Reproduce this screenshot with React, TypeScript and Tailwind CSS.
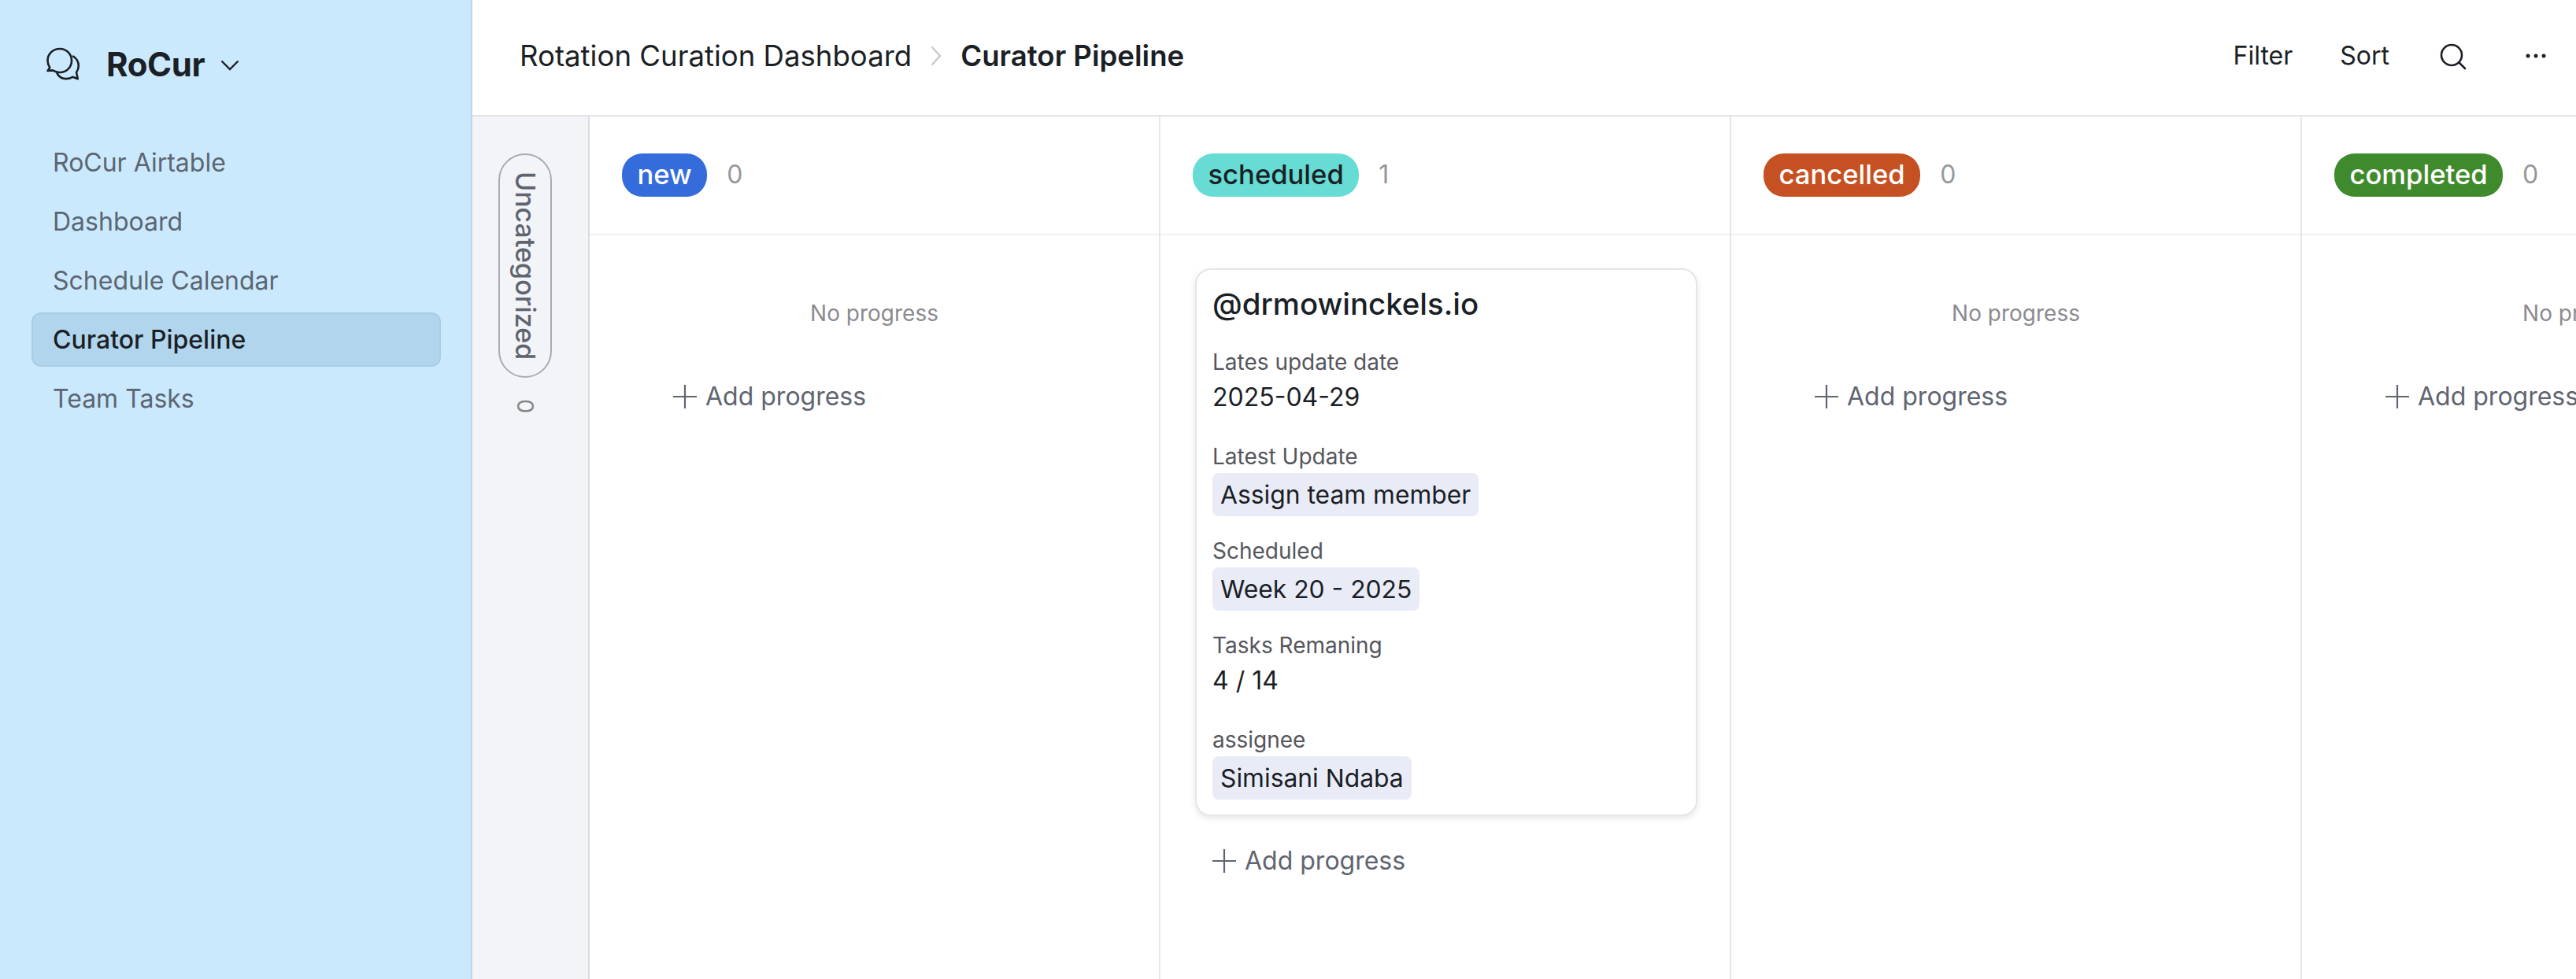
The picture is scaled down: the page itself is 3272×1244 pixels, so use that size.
import React from "react";

const nav = ["RoCur Airtable", "Dashboard", "Schedule Calendar", "Curator Pipeline", "Team Tasks"];

function Logo() {
  return (
    <svg width="46" height="46" viewBox="0 0 46 46" fill="none" stroke="#1b1f26" strokeWidth="2.6" strokeLinejoin="round" strokeLinecap="round">
      <path d="M19 3C10 3 3.500 9.500 3.500 18c0 3.400 1 6.400 2.800 8.900L3.500 31l6.400-.6C12.500 32 15.600 33 19 33c8.500 0 15-6.600 15-15S27.500 3 19 3Z" />
      <path d="M36 12.500c4.200 2.800 6.800 7.100 6.800 12 0 3.300-1 6.100-2.800 8.500l1.800 8.200-6.500-2.400c-2.100 1.500-4.800 2.300-7.800 2.300-5.400 0-9.900-2.700-12-7" />
    </svg>
  );
}

function Plus() {
  return (
    <svg width="30" height="30" viewBox="0 0 30 30" fill="none" stroke="#5f6570" strokeWidth="2.2">
      <path d="M15 0v30M0 15h30" />
    </svg>
  );
}

function AddProgress({ className }: { className: string }) {
  return (
    <div className={`flex items-center gap-[11px] text-[32px] leading-[40px] text-[#5f6570] ${className}`}>
      <Plus />
      <span>Add progress</span>
    </div>
  );
}

function Empty() {
  return (
    <div className="flex flex-col">
      <div className="mt-[40px] text-center text-[28px] leading-[34px] text-[#8b8b8f]">No progress</div>
      <AddProgress className="ml-[62px] mt-[69px]" />
    </div>
  );
}

function Field({ label, value, tag }: { label: string; value: string; tag?: boolean }) {
  return (
    <div className="flex h-[120px] flex-col items-start">
      <div className="h-[36px] text-[28px] leading-[36px] text-[#55565c]">{label}</div>
      {tag ? (
        <div className="mt-[3px] flex h-[55px] items-center rounded-[8px] bg-[#e9ecf7] px-[10px] text-[31.800px] text-[#1b1f26]">{value}</div>
      ) : (
        <div className="mt-[5px] text-[32px] leading-[44px] text-[#1b1f26]">{value}</div>
      )}
    </div>
  );
}

function Card() {
  return (
    <div className="flex flex-col">
      <div className="mr-[-3px] flex h-[696px] flex-col rounded-[20px] border-2 border-[#e6e6e8] bg-white px-[20px] pt-[19px] shadow-[0_3px_8px_rgba(0,0,0,0.10)]">
        <div className="text-[38.400px] leading-[48px] font-medium text-[#1b1f26]">@drmowinckels.io</div>
        <div className="mt-[32px] flex flex-col">
          <Field label="Lates update date" value="2025-04-29" />
          <Field label="Latest Update" value="Assign team member" tag />
          <Field label="Scheduled" value="Week 20 - 2025" tag />
          <Field label="Tasks Remaning" value="4 / 14" />
          <Field label="assignee" value="Simisani Ndaba" tag />
        </div>
      </div>
      <AddProgress className="ml-[22px] mt-[37px]" />
    </div>
  );
}

function Column({ name, count, pill, children }: { name: string; count: string; pill: string; children: React.ReactNode }) {
  return (
    <div className="flex h-full w-[725px] shrink-0 flex-col border-r-2 border-[#e6e6e8]">
      <div className="flex h-[151px] items-center gap-[25px] border-b-2 border-[#f0f0f2] pb-[1px] pl-[41px]">
        <span className={`flex h-[55px] items-center rounded-[26px] px-[19.500px] text-[34.600px] font-medium ${pill}`}>{name}</span>
        <span className="text-[32px] text-[#97979b]">{count}</span>
      </div>
      <div className="flex-1 px-[44px] pt-[42px]">{children}</div>
    </div>
  );
}

export default function App() {
  return (
    <div className="flex h-[1244px] w-[3272px] overflow-hidden bg-white font-['Inter',sans-serif]">
      <aside className="flex w-[600px] shrink-0 flex-col border-r-2 border-[#bcd6e8] bg-[#cbe9fd] pl-[40px] pr-[38px]">
        <div className="flex h-[163px] items-center pl-[17px]">
          <Logo />
          <span className="ml-[32px] text-[42px] font-bold tracking-[-0.4px] text-[#1b1f26]">RoCur</span>
          <svg className="ml-[20px] mt-[3px]" width="24" height="14" viewBox="0 0 24 14" fill="none" stroke="#1b1f26" strokeWidth="2.4">
            <path d="M1.500 1.500 12 12 22.500 1.500" />
          </svg>
        </div>
        <nav className="mt-[9px] flex flex-col gap-[6px]">
          {nav.map((n) =>
            n === "Curator Pipeline" ? (
              <div key={n} className="flex h-[69px] items-center rounded-[12px] border-2 border-[#a9cde4] bg-[#b1d5ec] pl-[25px] text-[32px] font-medium text-[#1b1f26]">
                {n}
              </div>
            ) : (
              <div key={n} className="flex h-[69px] items-center pl-[27px] text-[32px] text-[#5b6672]">
                {n}
              </div>
            )
          )}
        </nav>
      </aside>
      <main className="flex min-w-0 flex-1 flex-col">
        <header className="flex h-[148px] shrink-0 items-center border-b-2 border-[#e3e3e6] pb-[4px] pl-[60px] pr-[38px]">
          <span className="text-[36.600px] text-[#1b1f26]">Rotation Curation Dashboard</span>
          <svg className="ml-[24px] mr-[24px]" width="14" height="26" viewBox="0 0 14 26" fill="none" stroke="#c8c9cd" strokeWidth="2.4">
            <path d="M1.500 1.500 12 13 1.500 24.500" />
          </svg>
          <span className="text-[36.600px] font-semibold text-[#1b1f26]">Curator Pipeline</span>
          <div className="ml-auto flex items-center text-[32px] text-[#1b1f26]">
            <span>Filter</span>
            <span className="ml-[60px]">Sort</span>
            <svg className="ml-[64px] mt-[2px]" width="34" height="34" viewBox="0 0 34 34" fill="none" stroke="#1b1f26" strokeWidth="2.6" strokeLinecap="round">
              <circle cx="15" cy="15" r="13" />
              <path d="M24.500 24.500 32 32" />
            </svg>
            <svg className="ml-[75px]" width="26" height="8" viewBox="0 0 26 8" fill="#1b1f26">
              <circle cx="3" cy="4" r="2.500" />
              <circle cx="13" cy="4" r="2.500" />
              <circle cx="23" cy="4" r="2.500" />
            </svg>
          </div>
        </header>
        <div className="flex min-h-0 flex-1">
          <div className="flex w-[149px] shrink-0 flex-col items-center border-r-2 border-[#dcdde1] bg-[#f3f4f8] pr-[13px] pt-[47px]">
            <div className="flex h-[285px] w-[68px] items-center justify-center rounded-[34px] border-2 border-[#ababae] text-[34px] font-medium text-[#5f6570] [writing-mode:vertical-rl]">
              Uncategorized
            </div>
            <div className="mt-[27px] text-[29px] text-[#85868a] [writing-mode:vertical-rl]">0</div>
          </div>
          <Column name="new" count="0" pill="bg-[#356cdc] text-white"><Empty /></Column>
          <Column name="scheduled" count="1" pill="bg-[#66dcd4] text-[#1b1f26]"><Card /></Column>
          <Column name="cancelled" count="0" pill="bg-[#c55021] text-white"><Empty /></Column>
          <Column name="completed" count="0" pill="bg-[#3f8a2c] text-white"><Empty /></Column>
        </div>
      </main>
    </div>
  );
}
